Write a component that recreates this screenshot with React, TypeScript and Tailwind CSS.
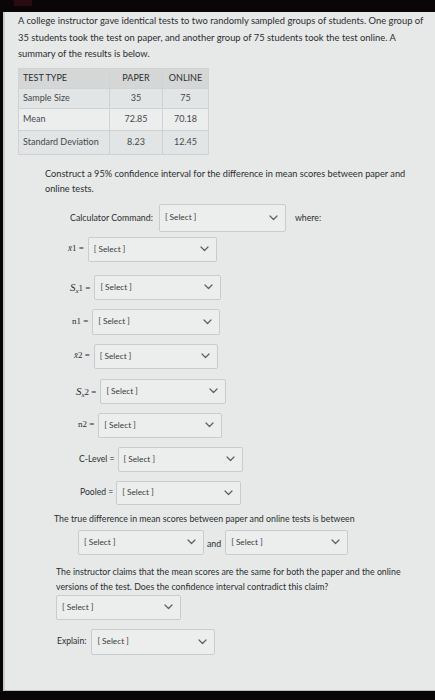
import React from "react";

const Chevron = () => (
  <svg width="9" height="6" viewBox="0 0 9 6" className="shrink-0">
    <path d="M1 1 L4.5 4.5 L8 1" fill="none" stroke="#5a5f63" strokeWidth="1.2" strokeLinecap="round" strokeLinejoin="round" />
  </svg>
);

const Sel = ({ w = "w-[127px]", h = "h-[25px]" }: { w?: string; h?: string }) => (
  <div className={`${w} ${h} flex items-center justify-between rounded-[2px] border border-[#c9cccc] bg-[#eceeee] pl-[5px] pr-[7px]`}>
    <span className="text-[8.3px] text-[#3a3a3a]">[ Select ]</span>
    <Chevron />
  </div>
);

const serif = { fontFamily: '"Liberation Serif", "DejaVu Serif", serif' };

export default function App() {
  return (
    <div className="w-[435px] h-[700px] bg-[#0a0607] overflow-hidden relative" style={{ fontFamily: 'Lato, "Open Sans", sans-serif' }}>
      <div className="h-[12px] bg-[#0a0607] relative">
        <div className="absolute left-[14px] top-0 w-[18px] h-[6px] bg-[#2a0c10]" />
      </div>
      <div className="h-[679px] bg-[#e6e9e8] border-l-[2px] border-l-[#c9cdcc] ml-[3px] border-b border-b-[#b9bdbc] text-[#2b2e30]">
        <div className="pl-[13px] pr-[8px] pt-[1px] text-[9.4px] leading-[16.5px]">
          <p>A college instructor gave identical tests to two randomly sampled groups of students. One group of</p>
          <p>35 students took the test on paper, and another group of 75 students took the test online. A</p>
          <p>summary of the results is below.</p>
        </div>

        <table className="ml-[13px] mt-[5px] w-[191px] border-collapse text-[9px]">
          <thead>
            <tr className="bg-[#d5d7d7] h-[20px]">
              <th className="text-left font-normal pl-[4px] w-[91px] border border-[#d0d3d3]">TEST TYPE</th>
              <th className="font-normal w-[53px] border border-[#d0d3d3]">PAPER</th>
              <th className="font-normal border border-[#d0d3d3]">ONLINE</th>
            </tr>
          </thead>
          <tbody className="text-[#45484b]">
            <tr className="bg-[#e2e5e5] h-[20px]">
              <td className="pl-[4px] border border-[#cfd2d2]">Sample Size</td>
              <td className="text-center border border-[#cfd2d2]">35</td>
              <td className="text-center border border-[#cfd2d2]">75</td>
            </tr>
            <tr className="bg-[#eceeee] h-[22px]">
              <td className="pl-[4px] border border-[#cfd2d2]">Mean</td>
              <td className="text-center border border-[#cfd2d2]">72.85</td>
              <td className="text-center border border-[#cfd2d2]">70.18</td>
            </tr>
            <tr className="bg-[#e2e5e5] h-[24px]">
              <td className="pl-[4px] border border-[#cfd2d2]">Standard Deviation</td>
              <td className="text-center border border-[#cfd2d2]">8.23</td>
              <td className="text-center border border-[#cfd2d2]">12.45</td>
            </tr>
          </tbody>
        </table>

        <div className="pl-[40px] pr-[20px] mt-[11px] text-[9.2px] leading-[15px]">
          <p>Construct a 95% confidence interval for the difference in mean scores between paper and</p>
          <p>online tests.</p>
        </div>

        <div className="flex items-center mt-[8px] ml-[65px] text-[8.8px]">
          <span className="mr-[6px]">Calculator Command:</span>
          <Sel h="h-[28px]" />
          <span className="ml-[9px]">where:</span>
        </div>

        <div className="flex items-center mt-[5px] ml-[63px] text-[9px]">
          <span className="mr-[4px]" style={serif}><span className="italic">x̄</span>1 =</span>
          <Sel w="w-[129px]" />
        </div>

        <div className="flex items-center mt-[13px] ml-[65px] text-[9px]">
          <span className="mr-[4px]" style={serif}><span className="italic text-[11px]">S</span><sub className="italic text-[7px]">x</sub>1 =</span>
          <Sel w="w-[127px]" />
        </div>

        <div className="flex items-center mt-[9px] ml-[67px] text-[9px]">
          <span className="mr-[4px]" style={serif}>n1 =</span>
          <Sel w="w-[128px]" h="h-[26px]" />
        </div>

        <div className="flex items-center mt-[9px] ml-[69px] text-[9px]">
          <span className="mr-[4px]" style={serif}><span className="italic">x̄</span>2 =</span>
          <Sel w="w-[124px]" />
        </div>

        <div className="flex items-center mt-[10px] ml-[71px] text-[9px]">
          <span className="mr-[4px]" style={serif}><span className="italic text-[11px]">S</span><sub className="italic text-[7px]">x</sub>2 =</span>
          <Sel w="w-[126px]" />
        </div>

        <div className="flex items-center mt-[9px] ml-[73px] text-[9px]">
          <span className="mr-[4px]" style={serif}>n2 =</span>
          <Sel w="w-[124px]" />
        </div>

        <div className="flex items-center mt-[9px] ml-[74px] text-[8.6px]">
          <span className="mr-[3px]">C-Level =</span>
          <Sel w="w-[125px]" />
        </div>

        <div className="flex items-center mt-[9px] ml-[75px] text-[8.6px]">
          <span className="mr-[3px]">Pooled =</span>
          <Sel w="w-[125px]" h="h-[24px]" />
        </div>

        <p className="ml-[49px] mt-[8px] text-[8.8px] leading-[12px]">The true difference in mean scores between paper and online tests is between</p>

        <div className="flex items-center mt-[5px] ml-[73px] text-[8.8px]">
          <Sel w="w-[126px]" />
          <span className="ml-[3px] mr-[4px] mt-[4px]">and</span>
          <Sel w="w-[123px]" />
        </div>

        <div className="ml-[51px] mt-[9px] pr-[10px] text-[8.8px] leading-[15px]">
          <p>The instructor claims that the mean scores are the same for both the paper and the online</p>
          <p>versions of the test. Does the confidence interval contradict this claim?</p>
        </div>

        <div className="ml-[51px] mt-[1px]">
          <Sel w="w-[125px]" />
        </div>

        <div className="flex items-center mt-[9px] ml-[52px] text-[8.6px]">
          <span className="mr-[5px]">Explain:</span>
          <Sel w="w-[124px]" h="h-[26px]" />
        </div>
      </div>
    </div>
  );
}
